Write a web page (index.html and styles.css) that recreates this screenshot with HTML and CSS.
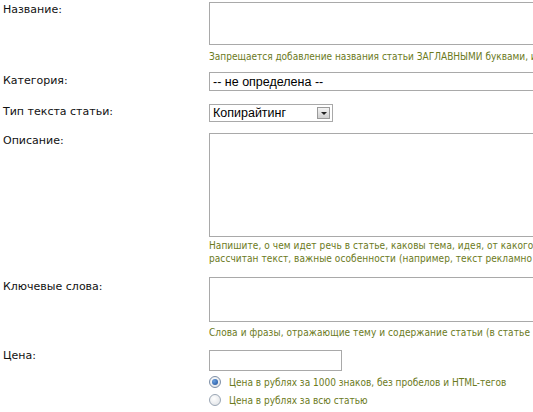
FILE: index.html
```html
<!DOCTYPE html>
<html lang="ru">
<head>
<meta charset="utf-8">
<title>Добавление статьи</title>
<link rel="stylesheet" href="styles.css">
</head>
<body>
<form class="form">
  <div class="row r-title">
    <label class="label">Название:</label>
    <div class="field">
      <textarea class="box ta-title"></textarea>
      <div class="hint h-title">Запрещается добавление названия статьи ЗАГЛАВНЫМИ буквами, и</div>
    </div>
  </div>
  <div class="row r-cat">
    <label class="label lp1">Категория:</label>
    <div class="field">
      <div class="box sel sel-cat">-- не определена --</div>
    </div>
  </div>
  <div class="row r-type">
    <label class="label">Тип текста статьи:</label>
    <div class="field">
      <div class="box sel sel-type"><span class="sel-text">Копирайтинг</span><span class="sel-btn"><span class="tri"></span></span></div>
    </div>
  </div>
  <div class="row r-desc">
    <label class="label">Описание:</label>
    <div class="field">
      <textarea class="box ta-desc"></textarea>
      <div class="hint h-desc">Напишите, о чем идет речь в статье, каковы тема, идея, от какого<br>рассчитан текст, важные особенности (например, текст рекламно</div>
    </div>
  </div>
  <div class="row r-keys">
    <label class="label lp2">Ключевые слова:</label>
    <div class="field">
      <textarea class="box ta-keys"></textarea>
      <div class="hint h-keys">Слова и фразы, отражающие тему и содержание статьи (в статье</div>
    </div>
  </div>
  <div class="row r-price">
    <label class="label lm">Цена:</label>
    <div class="field">
      <input class="box price" type="text">
      <div class="radios">
        <div class="radio-row"><span class="radio checked"></span><span class="rtext">Цена в рублях за 1000 знаков, без пробелов и HTML-тегов</span></div>
        <div class="radio-row"><span class="radio"></span><span class="rtext">Цена в рублях за всю статью</span></div>
      </div>
    </div>
  </div>
</form>
</body>
</html>
```
FILE: styles.css
```css
html, body {
  margin: 0;
  padding: 0;
  background: #fff;
  overflow: hidden;
}
body {
  font-family: "DejaVu Sans", Verdana, sans-serif;
  font-size: 11px;
  color: #111;
  width: 533px;
  height: 412px;
}
.form {
  display: flex;
  flex-direction: column;
}
.row {
  display: grid;
  grid-template-columns: 209px 324px;
}
.label {
  padding-left: 3px;
  line-height: 15px;
}
.lp1 { padding-top: 1px; }
.lp2 { padding-top: 2px; }
.lm { margin-top: -2px; }
.field {
  display: flex;
  flex-direction: column;
  align-items: flex-start;
  min-width: 0;
}
.box {
  box-sizing: border-box;
  border: 1px solid #a9a9a9;
  background: #fff;
  margin: 0;
  display: block;
}
textarea.box {
  resize: none;
  width: calc(100% + 20px);
  font: inherit;
}
.ta-title { height: 43px; }
.ta-desc { height: 104px; }
.ta-keys { height: 45px; }
.hint {
  font-family: "DejaVu Sans Condensed", "DejaVu Sans", sans-serif;
  font-size: 10px;
  letter-spacing: 0.07px;
  color: #6b7a1c;
  white-space: nowrap;
}
.h-title { margin-top: 6px; line-height: 12px; letter-spacing: 0; }
.h-desc { margin-top: 2px; line-height: 13px; }
.h-keys { margin-top: 4px; line-height: 13px; }
.r-title { margin-top: 2px; }
.r-cat { margin-top: 9px; }
.r-type { margin-top: 13px; }
.r-desc { margin-top: 11px; }
.r-keys { margin-top: 12px; }
.r-price { margin-top: 11px; }
.sel {
  font-family: "Liberation Sans", Arial, sans-serif;
  font-size: 12.5px;
  color: #000;
  display: flex;
  align-items: center;
}
.sel-cat {
  width: calc(100% + 20px);
  height: 19px;
  padding-left: 3px;
}
.sel-type {
  width: 124px;
  height: 18px;
  padding: 1px 2px 1px 3px;
  justify-content: space-between;
}
.sel-btn {
  box-sizing: border-box;
  width: 13px;
  height: 12px;
  border: 1px solid #9a9a9a;
  background: linear-gradient(#f4f4f4, #cfcfcf);
  display: flex;
  align-items: center;
  justify-content: center;
}
.tri {
  width: 0;
  height: 0;
  border-left: 3px solid transparent;
  border-right: 3px solid transparent;
  border-top: 3px solid #222;
}
.price {
  width: 133px;
  height: 21px;
  font: inherit;
}
.radios {
  margin-top: 2px;
}
.radio-row {
  display: flex;
  align-items: center;
  height: 18px;
}
.radio {
  box-sizing: border-box;
  width: 12px;
  height: 12px;
  border-radius: 50%;
  border: 1px solid #9aa6b4;
  background: radial-gradient(circle at 40% 35%, #ffffff, #dcdfe3);
  margin-right: 8px;
  display: flex;
  align-items: center;
  justify-content: center;
}
.radio.checked {
  border-color: #7e8fa6;
}
.radio.checked::after {
  content: "";
  width: 6px;
  height: 6px;
  border-radius: 50%;
  background: radial-gradient(circle at 35% 35%, #6aa0df, #1c4f9a);
}
.rtext {
  font-family: "DejaVu Sans Condensed", "DejaVu Sans", sans-serif;
  font-size: 10px;
  color: #6b7a1c;
  white-space: nowrap;
}
```
